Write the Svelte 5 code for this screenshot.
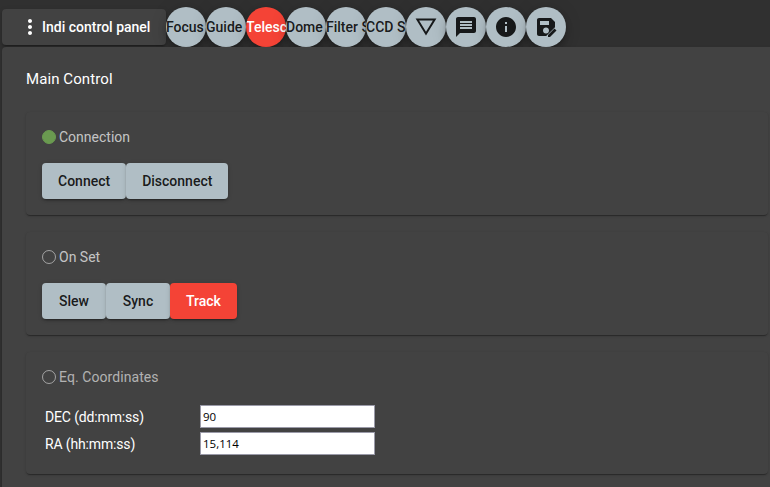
<script>
  const tabs = [
    { label: 'Focus' },
    { label: 'Guide' },
    { label: 'Telescope', active: true },
    { label: 'Dome' },
    { label: 'Filter Simulator' },
    { label: 'CCD Simulator' }
  ];
</script>

<div class="page">
  <header class="top">
    <button class="menu">
      <svg class="dots" viewBox="0 0 24 24" width="24" height="24"><path fill="currentColor" d="M12 8c1.1 0 2-.9 2-2s-.9-2-2-2-2 .9-2 2 .9 2 2 2zm0 2c-1.1 0-2 .9-2 2s.9 2 2 2 2-.9 2-2-.9-2-2-2zm0 6c-1.1 0-2 .9-2 2s.9 2 2 2 2-.9 2-2-.9-2-2-2z"/></svg>
      <span>Indi control panel</span>
    </button>
    {#each tabs as t}
      <button class="fab" class:red={t.active}><span class="clip">{t.label}</span></button>
    {/each}
    <button class="fab" aria-label="filter">
      <svg viewBox="0 0 24 24" width="24" height="24"><path fill="currentColor" d="M12 20.6 1.6 3.4h20.8L12 20.6zM5.1 5.400 12 16.8l6.9-11.4H5.1z"/></svg>
    </button>
    <button class="fab" aria-label="messages">
      <svg viewBox="0 0 24 24" width="24" height="24"><path fill="currentColor" d="M20 2H4c-1.1 0-2 .9-2 2v18l4-4h14c1.1 0 2-.9 2-2V4c0-1.100-.9-2-2-2zM18 14H6v-2h12v2zm0-3H6V9h12v2zm0-3H6V6h12v2z"/></svg>
    </button>
    <button class="fab" aria-label="info">
      <svg viewBox="0 0 24 24" width="24" height="24"><path fill="currentColor" d="M12 2C6.480 2 2 6.480 2 12s4.480 10 10 10 10-4.480 10-10S17.520 2 12 2zm1 15h-2v-6h2v6zm0-8h-2V7h2v2z"/></svg>
    </button>
    <button class="fab" aria-label="save">
      <svg viewBox="0 0 24 24" width="24" height="24"><path fill="currentColor" d="M17 3H5c-1.100 0-2 .9-2 2v14c0 1.100.9 2 2 2h7.200l8.800-8.800V7l-4-4zM6 6h9v4H6V6zm6 12.500c-1.700 0-3-1.300-3-3s1.300-3 3-3 3 1.300 3 3-1.300 3-3 3z"/><path fill="currentColor" d="M14 22v-2l6.500-6.500 2 2L16 22h-2z"/></svg>
    </button>
  </header>

  <main class="panel">
    <h1>Main Control</h1>

    <section class="card">
      <div class="title"><span class="led on"></span><span>Connection</span></div>
      <div class="btns">
        <button class="btn">Connect</button>
        <button class="btn">Disconnect</button>
      </div>
    </section>

    <section class="card">
      <div class="title"><span class="led"></span><span>On Set</span></div>
      <div class="btns">
        <button class="btn">Slew</button>
        <button class="btn">Sync</button>
        <button class="btn red">Track</button>
      </div>
    </section>

    <section class="card coords">
      <div class="title dim"><span class="led"></span><span>Eq. Coordinates</span></div>
      <div class="fields">
        <label class="field"><span>DEC (dd:mm:ss)</span><input value="90" /></label>
        <label class="field"><span>RA (hh:mm:ss)</span><input value="15,114" /></label>
      </div>
    </section>

    <section class="card"></section>
  </main>
</div>

<style>
  :global(body) {
    margin: 0;
    background: #303030;
    overflow: hidden;
  }
  .page {
    width: 770px;
    height: 487px;
    overflow: hidden;
    font-family: Roboto, "Liberation Sans", sans-serif;
    background: #303030;
  }
  button {
    font-family: inherit;
    border: 0;
    padding: 0;
    cursor: pointer;
  }
  .top {
    display: flex;
    align-items: flex-start;
    height: 47px;
    padding: 7px 0 0 2px;
    box-sizing: border-box;
  }
  .menu {
    width: 164px;
    height: 36px;
    margin-top: 2px;
    display: flex;
    align-items: center;
    gap: 0;
    padding-left: 16px;
    box-sizing: border-box;
    background: #424242;
    color: #fff;
    border-radius: 4px;
    font-size: 14px;
    font-weight: 500;
    line-height: 1;
    box-shadow: 0 3px 1px -2px rgba(0,0,0,.2), 0 2px 2px 0 rgba(0,0,0,.14), 0 1px 5px 0 rgba(0,0,0,.12);
  }
  .dots { flex: none; }
  .fab {
    flex: none;
    width: 40px;
    height: 40px;
    border-radius: 50%;
    background: #b0bec5;
    color: rgba(0,0,0,.87);
    display: flex;
    align-items: center;
    justify-content: center;
    overflow: hidden;
    font-size: 14px;
    font-weight: 500;
    box-shadow: 0 3px 5px -1px rgba(0,0,0,.2), 0 6px 10px 0 rgba(0,0,0,.14), 0 1px 18px 0 rgba(0,0,0,.12);
  }
  .fab.red { background: #f44336; color: #fff; }
  .clip {
    display: block;
    width: 40px;
    overflow: hidden;
    white-space: nowrap;
    text-align: left;
  }
  .panel {
    position: relative;
    margin-left: 2px;
    width: 790px;
    height: 470px;
    padding: 24px;
    box-sizing: border-box;
    background: #424242;
    border-radius: 4px;
    color: #fff;
    box-shadow: 0 2px 1px -1px rgba(0,0,0,.2), 0 1px 1px 0 rgba(0,0,0,.14), 0 1px 3px 0 rgba(0,0,0,.12);
  }
  h1 {
    margin: 0;
    font-size: 15px;
    font-weight: 400;
    letter-spacing: .09px;
    line-height: 16px;
    height: 41px;
    color: #fff;
  }
  .card {
    background: #424242;
    border-radius: 4px;
    height: 103px;
    margin-bottom: 17px;
    padding: 16px;
    box-sizing: border-box;
    box-shadow: 0 2px 1px -1px rgba(0,0,0,.2), 0 1px 1px 0 rgba(0,0,0,.14), 0 1px 3px 0 rgba(0,0,0,.12);
  }
  .coords { height: 122px; }
  .title {
    display: flex;
    align-items: center;
    gap: 3px;
    height: 18px;
    font-size: 14px;
    color: rgba(255,255,255,.7);
  }
  .title.dim { color: rgba(255,255,255,.6); letter-spacing: .07px; }
  .led {
    width: 14px;
    height: 14px;
    border-radius: 50%;
    box-sizing: border-box;
    border: 1px solid rgba(255,255,255,.5);
  }
  .led.on { background: #6a9a50; border-color: #6a9a50; }
  .btns {
    display: flex;
    margin-top: 17px;
  }
  .btn {
    height: 36px;
    min-width: 64px;
    padding: 0 16px;
    border-radius: 4px;
    background: #b0bec5;
    color: rgba(0,0,0,.87);
    font-size: 14px;
    font-weight: 500;
    box-shadow: 0 3px 1px -2px rgba(0,0,0,.2), 0 2px 2px 0 rgba(0,0,0,.14), 0 1px 5px 0 rgba(0,0,0,.12);
  }
  .btn.red { background: #f44336; color: #fff; }
  .fields {
    margin-top: 19px;
    display: flex;
    flex-direction: column;
    gap: 4px;
  }
  .field {
    display: flex;
    align-items: center;
    padding-left: 3px;
    height: 23px;
    font-size: 14px;
    letter-spacing: -.15px;
    color: #fff;
  }
  .field span { width: 155px; flex: none; }
  input {
    width: 175px;
    height: 23px;
    box-sizing: border-box;
    border: 1px solid #9a9aa8;
    padding: 1px 2px;
    background: #fff;
    color: #000;
    font-family: "Open Sans", "Noto Sans", sans-serif;
    font-size: 11.5px;
    letter-spacing: 0;
    outline: none;
  }
</style>
